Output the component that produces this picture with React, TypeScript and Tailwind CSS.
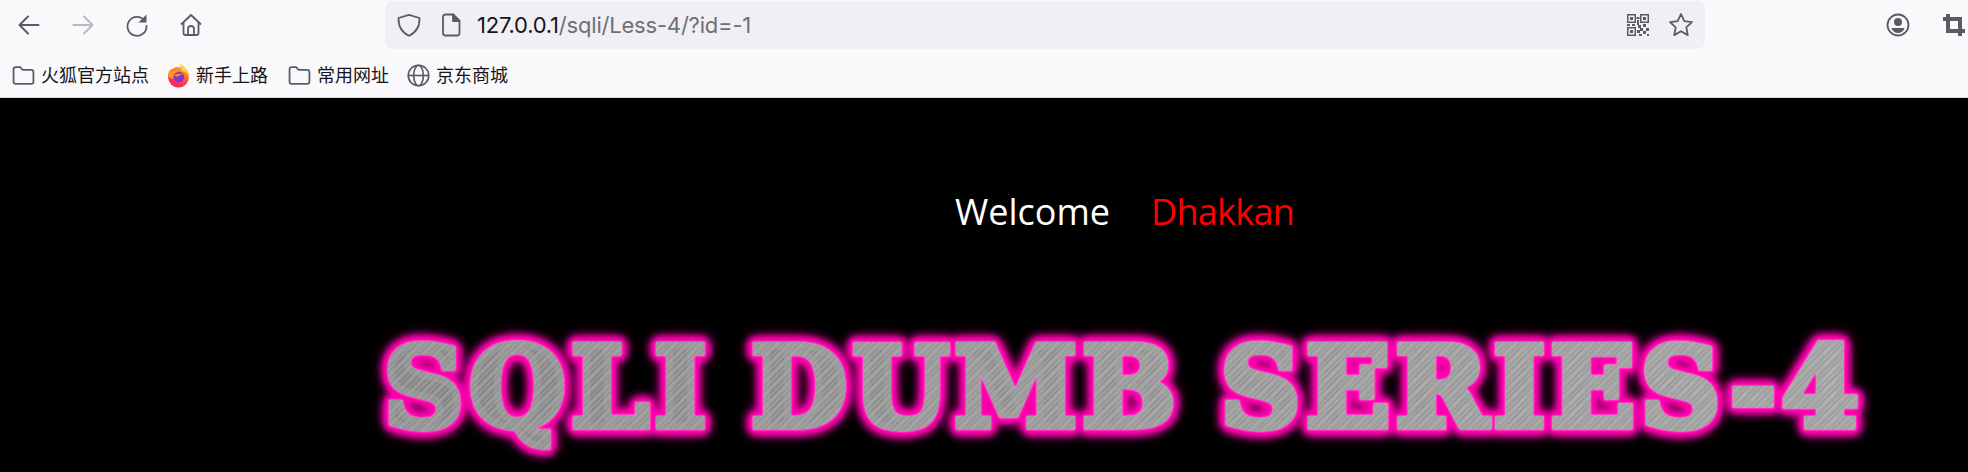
import React from 'react';

const ui = "font-['Inter','Noto_Sans_CJK_SC',sans-serif]";
const cjk = "font-['Noto_Sans','Noto_Sans_CJK_SC',sans-serif]";

const Folder: React.FC = () => (
  <svg width="23" height="21" viewBox="0 0 22 20" fill="none" stroke="#5b5b66" strokeWidth="1.7">
    <path d="M1.5 16V4a2 2 0 0 1 2-2h4.2l2.6 2.6H18.5a2 2 0 0 1 2 2V16a2 2 0 0 1-2 2h-15a2 2 0 0 1-2-2z" strokeLinejoin="round" />
  </svg>
);

const Globe: React.FC = () => (
  <svg width="23" height="23" viewBox="0 0 22 22" fill="none" stroke="#5b5b66" strokeWidth="1.6">
    <circle cx="11" cy="11" r="9.8" />
    <ellipse cx="11" cy="11" rx="4.6" ry="9.8" />
    <path d="M1.2 11h19.6" />
  </svg>
);

const FirefoxLogo: React.FC = () => (
  <svg width="23" height="25" viewBox="0 0 22 24">
    <defs>
      <linearGradient id="ff-body" x1="0.7" y1="0" x2="0.3" y2="1">
        <stop offset="0" stopColor="#ffb11f" />
        <stop offset="0.55" stopColor="#ff4f3a" />
        <stop offset="1" stopColor="#f5157f" />
      </linearGradient>
    </defs>
    <circle cx="11" cy="13.5" r="10" fill="url(#ff-body)" />
    <path d="M12 0.500c4.500 2.500 9 6.500 10 12.500-2-3.500-5-5-8-5C14.500 5 13.500 3 12 0.500z" fill="#ffd43a" />
    <path d="M1 12c0-3 1-5 3-6.500-.3 1.500 0 2.500.8 3.200C6.500 7 9 7 11 8 7 9 5 12 6 15c-2 0-4-1-5-3z" fill="#ff9a1f" />
    <circle cx="11.500" cy="13.500" r="5" fill="#7a3bd0" />
    <path d="M7 12c2-2 6-2.500 8.500-.5-2-.5-4 0-4.500 1.500-1.500 0-3 0-4-1z" fill="#ff8a2a" />
  </svg>
);

const Bookmark: React.FC<{ icon: React.ReactNode; label: string; className: string }> = ({ icon, label, className }) => (
  <div className={`flex items-center ${className}`}>
    {icon}
    <span className={`${cjk} text-[18px] leading-none text-[#15141a]`}>{label}</span>
  </div>
);

const App: React.FC = () => {
  return (
    <div className="h-[472px] w-[1968px] overflow-hidden bg-black">
      <div className="h-[98px] bg-[#f9f9fb] border-b border-[#d4d4d8]">
        <div className="flex items-start h-[50px]">
          <div className="flex items-center h-[50px] pl-[17px] gap-[30px] w-[385px]">
            <svg width="24" height="24" viewBox="0 0 24 24" fill="none" stroke="#5b5b66" strokeWidth="2" strokeLinecap="round" strokeLinejoin="round">
              <path d="M2.500 12h19M11 3.500 2.500 12l8.500 8.500" />
            </svg>
            <svg width="24" height="24" viewBox="0 0 24 24" fill="none" stroke="#b9b9bf" strokeWidth="2" strokeLinecap="round" strokeLinejoin="round">
              <path d="M21.500 12h-19M13 3.500l8.500 8.500-8.500 8.500" />
            </svg>
            <svg width="24" height="24" viewBox="0 0 24 24" fill="none" stroke="#5b5b66" strokeWidth="1.800" strokeLinecap="round">
              <path d="M19.500 7.500A9.500 9.500 0 1 0 21.500 13" />
              <path d="M21.500 1.500v8h-8z" fill="#5b5b66" stroke="none" />
            </svg>
            <svg width="24" height="24" viewBox="0 0 24 24" fill="none" stroke="#5b5b66" strokeWidth="1.800" strokeLinejoin="round">
              <path d="M2 11.500 12 2l10 9.500M4.500 9.500V20a2 2 0 0 0 2 2h11a2 2 0 0 0 2-2V9.500" />
              <path d="M9 22v-6a3 3 0 0 1 6 0v6" />
            </svg>
          </div>

          <div className="mt-px flex items-center w-[1320px] h-[48px] rounded-lg bg-[#f0f0f4] pl-[12px] pr-[11px]">
            <svg width="24" height="24" viewBox="0 0 24 24" fill="none" stroke="#5b5b66" strokeWidth="1.800" strokeLinejoin="round">
              <path d="M12 1.800 22.500 5c.3 8-2.500 14-10.500 17.800C4 19 1.200 13 1.500 5z" />
            </svg>
            <svg className="ml-[20px]" width="20" height="24" viewBox="0 0 20 24" fill="none" stroke="#5b5b66" strokeWidth="1.800" strokeLinejoin="round">
              <path d="M2 4a2.500 2.500 0 0 1 2.500-2.500H12L18.500 8v12a2.500 2.500 0 0 1-2.500 2.500H4.500A2.500 2.500 0 0 1 2 20z" />
              <path d="M12 1.500V8h6.500z" fill="#5b5b66" />
            </svg>
            <div className={`${ui} ml-[16px] text-[22px] leading-none text-[#15141a] tracking-[-0.2px]`}>
              127.0.0.1<span className="text-[#6f6f78]">/sqli/Less-4/?id=-1</span>
            </div>
            <div className="ml-auto flex items-center gap-[19px]">
              <svg width="22" height="22" viewBox="0 0 22 22" fill="#5b5b66">
                <path fillRule="evenodd" d="M0 0h9v9H0zm1.500 1.500v6h6v-6zM13 0h9v9h-9zm1.500 1.500v6h6v-6zM0 13h9v9H0zm1.500 1.500v6h6v-6z" />
                <path d="M3 3h3v3H3zM16 3h3v3h-3zM3 16h3v3H3zM9.500 3h3v2h-3zM10 6h2v5h-2zM0 10h3v2H0zM5 10h3v2H5zM11 11h3v3h-3zM16 10h3v3h-3zM13 14h3v3h-3zM19 14h3v3h-3zM10 16h3v3h-3zM16 17h3v3h-3zM12 20h3v2h-3zM20 20h2v2h-2z" />
              </svg>
              <svg width="26" height="26" viewBox="0 0 26 26" fill="none" stroke="#5b5b66" strokeWidth="1.800" strokeLinejoin="round">
                <path d="m13 2 3.300 7.200 7.700.9-5.700 5.300 1.500 7.700L13 19.200l-6.800 3.900 1.500-7.700L2 10.100l7.700-.9z" />
              </svg>
            </div>
          </div>

          <div className="flex items-center h-[50px] pl-[181px] gap-[33px]">
            <svg width="24" height="24" viewBox="0 0 24 24" fill="none">
              <circle cx="12" cy="12" r="10.500" stroke="#5b5b66" strokeWidth="1.800" />
              <circle cx="12" cy="9" r="4" fill="#5b5b66" />
              <path d="M5.500 15h13c-1 3.500-3.500 5-6.500 5s-5.500-1.500-6.500-5z" fill="#5b5b66" />
            </svg>
            <svg width="22" height="22" viewBox="0 0 22 22" fill="none" stroke="#5b5b66" strokeWidth="4">
              <path d="M0 5h17v17M5 0v17h17" />
            </svg>
          </div>
        </div>

        <div className="flex items-center h-[50px] pl-[12px]">
          <Bookmark icon={<Folder />} label="火狐官方站点" className="gap-[6px]" />
          <Bookmark icon={<FirefoxLogo />} label="新手上路" className="gap-[6px] ml-[18px]" />
          <Bookmark icon={<Folder />} label="常用网址" className="gap-[6px] ml-[20px]" />
          <Bookmark icon={<Globe />} label="京东商城" className="gap-[6px] ml-[18px]" />
        </div>
      </div>

      <div className="pl-[955px] pt-[90px] flex gap-[41px] font-['Open_Sans',sans-serif] text-[36px] leading-[48px]">
        <span className="text-white">Welcome</span>
        <span className="text-[#ff0000] tracking-[-0.7px]">Dhakkan</span>
      </div>

      <div className="pl-[384px] mt-[86px]">
        <div className="inline-block whitespace-nowrap font-['DejaVu_Serif',serif] font-bold text-[110px] leading-[132px] tracking-[6px] [word-spacing:-5px] text-transparent bg-clip-text bg-[repeating-linear-gradient(135deg,rgba(255,255,255,0.12)_0px,rgba(0,0,0,0.1)_3px,rgba(255,255,255,0.16)_5px,rgba(0,0,0,0.12)_9px),linear-gradient(90deg,#909090,#adadad)] [-webkit-text-stroke:7px_rgba(165,165,165,0.45)] [filter:drop-shadow(0_0_1px_rgba(255,255,255,0.7))_drop-shadow(0_0_2px_#ff00b0)_drop-shadow(0_0_2px_#ff00b0)_drop-shadow(0_0_3px_#ff00b0)_drop-shadow(0_0_3px_#ff00b0)_drop-shadow(0_0_4px_#e800a0)]">
          SQLI DUMB SERIES-4
        </div>
      </div>
    </div>
  );
};

export default App;
